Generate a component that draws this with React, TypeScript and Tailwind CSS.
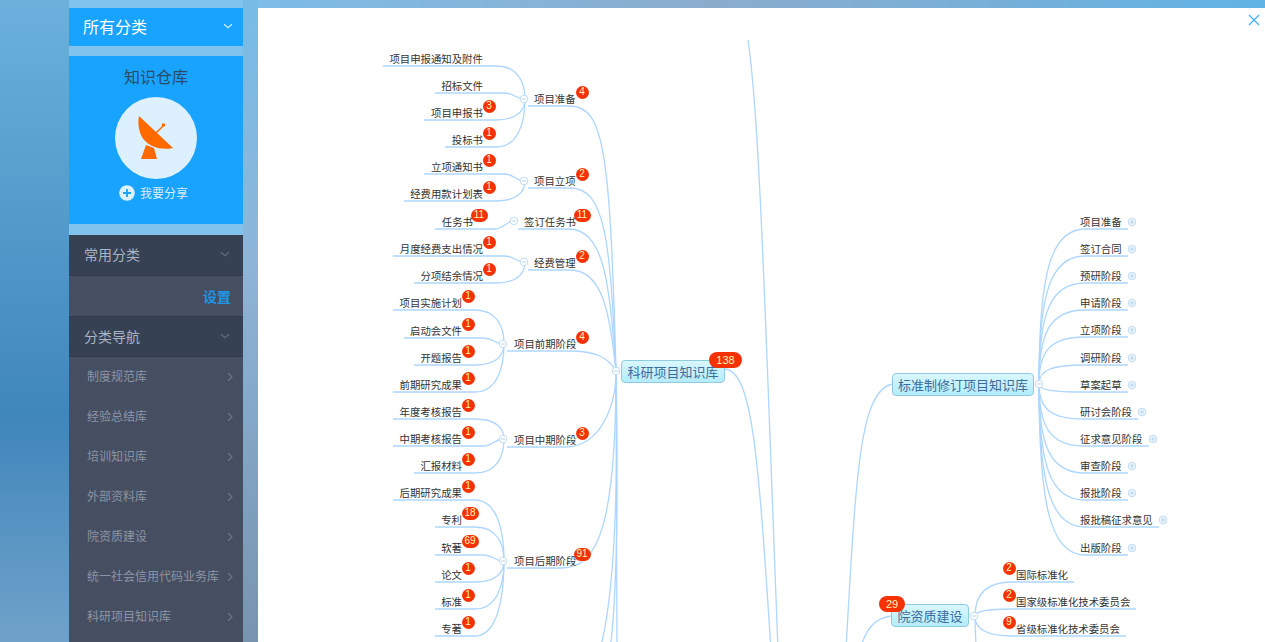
import React from 'react';

const LINE = '#aed6ff';

type Leaf = { t: string; tx: number; x0: number; y: number; end: number; b?: string; bx?: number };
type Branch = { t: string; tx: number; x0: number; y: number; end: number; b: string; bx: number; jx: number; jy: number; leaves: Leaf[] };

const leaf = (t: string, x0: number, y: number, end: number, b: string, bx: number): Leaf => ({
  t,
  x0,
  y,
  end,
  tx: x0 + 7,
  b,
  bx,
});

const branches: Branch[] = [
  {
    t: '项目准备', tx: 534, x0: 528, y: 106, end: 580, b: '4', bx: 582, jx: 524, jy: 99,
    leaves: [
      leaf('项目申报通知及附件', 383, 66, 487, '', 0),
      leaf('招标文件', 435, 93, 487, '', 0),
      leaf('项目申报书', 424, 120, 487, '3', 489),
      leaf('投标书', 445, 147, 487, '1', 489),
    ],
  },
  {
    t: '项目立项', tx: 534, x0: 528, y: 188, end: 580, b: '2', bx: 582, jx: 524, jy: 181,
    leaves: [
      leaf('立项通知书', 424, 174, 487, '1', 489),
      leaf('经费用款计划表', 404, 201, 487, '1', 489),
    ],
  },
  {
    t: '签订任务书', tx: 524, x0: 518, y: 229, end: 578, b: '11', bx: 582, jx: 514, jy: 221,
    leaves: [leaf('任务书', 435, 229, 477, '11', 479)],
  },
  {
    t: '经费管理', tx: 534, x0: 528, y: 270, end: 580, b: '2', bx: 582, jx: 524, jy: 262,
    leaves: [
      leaf('月度经费支出情况', 393, 256, 487, '1', 489),
      leaf('分项结余情况', 414, 283, 487, '1', 489),
    ],
  },
  {
    t: '项目前期阶段', tx: 514, x0: 507, y: 351, end: 580, b: '4', bx: 582, jx: 503, jy: 344,
    leaves: [
      leaf('项目实施计划', 393, 310, 466, '1', 468),
      leaf('启动会文件', 404, 338, 466, '1', 468),
      leaf('开题报告', 414, 365, 466, '1', 468),
      leaf('前期研究成果', 393, 392, 466, '1', 468),
    ],
  },
  {
    t: '项目中期阶段', tx: 514, x0: 507, y: 447, end: 575, b: '3', bx: 582, jx: 503, jy: 439,
    leaves: [
      leaf('年度考核报告', 393, 419, 466, '1', 468),
      leaf('中期考核报告', 393, 446, 466, '1', 468),
      leaf('汇报材料', 414, 473, 466, '1', 468),
    ],
  },
  {
    t: '项目后期阶段', tx: 514, x0: 507, y: 568, end: 572, b: '91', bx: 582, jx: 503, jy: 561,
    leaves: [
      leaf('后期研究成果', 393, 500, 466, '1', 468),
      leaf('专利', 435, 527, 466, '18', 470),
      leaf('软著', 435, 555, 466, '69', 470),
      leaf('论文', 435, 582, 466, '1', 468),
      leaf('标准', 435, 609, 466, '1', 468),
      leaf('专著', 435, 636, 466, '1', 468),
    ],
  },
];

const rightLeaves = [
  { t: '项目准备', y: 229, end: 1128 },
  { t: '签订合同', y: 256, end: 1128 },
  { t: '预研阶段', y: 283, end: 1128 },
  { t: '申请阶段', y: 310, end: 1128 },
  { t: '立项阶段', y: 337, end: 1128 },
  { t: '调研阶段', y: 365, end: 1128 },
  { t: '草案起草', y: 392, end: 1128 },
  { t: '研讨会阶段', y: 419, end: 1138 },
  { t: '征求意见阶段', y: 446, end: 1149 },
  { t: '审查阶段', y: 473, end: 1128 },
  { t: '报批阶段', y: 500, end: 1128 },
  { t: '报批稿征求意见', y: 527, end: 1159 },
  { t: '出版阶段', y: 555, end: 1128 },
];

const qualLeaves = [
  { t: '国际标准化', y: 582, end: 1074, b: '2' },
  { t: '国家级标准化技术委员会', y: 609, end: 1136, b: '2' },
  { t: '省级标准化技术委员会', y: 636, end: 1126, b: '9' },
];

const navItems = ['制度规范库', '经验总结库', '培训知识库', '外部资料库', '院资质建设', '统一社会信用代码业务库', '科研项目知识库'];

// leaf underline running right into its collapse circle
const leafPath = (l: Leaf, jx: number, jy: number) => {
  const sx = jx - 28;
  const midY = (l.y + jy) / 2;
  if (Math.abs(l.y - jy) < 10) {
    return `M${l.x0},${l.y} L${sx + 8},${l.y} C${jx - 10},${l.y} ${jx - 8},${jy} ${jx},${jy}`;
  }
  return `M${l.x0},${l.y} L${sx},${l.y} C${jx - 6},${l.y} ${jx + 1},${midY} ${jx + 1},${jy}`;
};

const branchPath = (b: Branch) => {
  const tx = 616;
  const ty = 371;
  if (b.y < 300) {
    return `M${b.x0},${b.y} L${b.end - 10},${b.y} C${b.end + 25},${b.y} ${tx - 6},${b.y + 50} ${tx},${ty}`;
  }
  if (b.y < 371) {
    return `M${b.x0},${b.y} L${b.end - 10},${b.y} C${b.end + 15},${b.y} ${tx - 8},${b.y + 6} ${tx},${ty}`;
  }
  return `M${b.x0},${b.y} L${b.end - 10},${b.y} C${b.end + 25},${b.y} ${tx},${b.y - 40} ${tx},${ty}`;
};

const rightPath = (y: number, end: number) =>
  `M1039,384 C1039,${y * 0.7 + 384 * 0.3} 1050,${y} 1085,${y} L${end},${y}`;

const qualPath = (y: number, end: number) =>
  `M975,616 C975,${y * 0.6 + 616 * 0.4} 985,${y} 1012,${y} L${end},${y}`;

function Badge({ x, y, v }: { x: number; y: number; v: string }) {
  const wide = v.length > 1;
  return (
    <div
      className={`absolute flex items-center justify-center rounded-full bg-[#f43205] text-[10px] leading-none text-[#fff6b8] font-['Liberation_Sans',sans-serif] h-[13px] ${wide ? 'w-[17px]' : 'w-[13px]'}`}
      style={{ left: x - 258 - (wide ? 8.5 : 6.5), top: y - 8 - 6.5 }}
    >
      {v}
    </div>
  );
}

function Label({ x, y, t }: { x: number; y: number; t: string }) {
  return (
    <div
      className="absolute h-[14px] whitespace-nowrap text-[10.4px] leading-[14px] text-[#333]"
      style={{ left: x - 258, top: y - 8 - 14 }}
    >
      {t}
    </div>
  );
}

function Topic({ x, y, w, h, t }: { x: number; y: number; w: number; h: number; t: string }) {
  return (
    <div
      className="absolute flex items-center justify-center whitespace-nowrap rounded-[4px] border border-[#8fcbdf] bg-gradient-to-b from-[#d9f7fe] to-[#b4ecfb] text-[13px] text-[#3c6c9e]"
      style={{ left: x - 258, top: y - 8, width: w, height: h }}
    >
      {t}
    </div>
  );
}

function Toggle({ x, y, plus }: { x: number; y: number; plus?: boolean }) {
  return (
    <g>
      <circle cx={x} cy={y} r={plus ? 3.8 : 3.8} fill={plus ? '#eaf5fd' : '#fff'} stroke="#c2dcf2" strokeWidth="1" />
      <path d={`M${x - 2},${y} H${x + 2}`} stroke="#b5d5ef" strokeWidth="1" />
      {plus && <path d={`M${x},${y - 2} V${y + 2}`} stroke="#b5d5ef" strokeWidth="1" />}
    </g>
  );
}

function Chevron({ down, color }: { down?: boolean; color: string }) {
  return (
    <svg width="10" height="10" viewBox="0 0 10 10" fill="none" stroke={color} strokeWidth="1.2">
      {down ? <path d="M1 3.2 L5 6.8 L9 3.2" /> : <path d="M3 1 L7 5 L3 9" />}
    </svg>
  );
}

function Sidebar() {
  return (
    <aside className="flex h-full w-[174px] shrink-0 flex-col bg-[#7fc3ee] pt-2">
      <div className="flex h-[38px] shrink-0 items-center justify-between bg-[#18a3ff] pb-[2px] pl-[14px] pr-[10px] text-base text-white">
        <span>所有分类</span>
        <Chevron down color="#d5eeff" />
      </div>
      <div className="mt-[10px] flex h-[168px] shrink-0 flex-col items-center bg-[#18a3ff] pt-[9px]">
        <div className="text-base leading-[22px] text-[#2b4a63]">知识仓库</div>
        <div className="mt-[10px] flex h-[82px] w-[82px] items-center justify-center rounded-full bg-[#dcf0fd]">
          <svg width="40" height="46" viewBox="0 0 40 46">
            <path d="M3 1 L37 33 C24 36 10 31 5 20 C2 13 2 6 3 1 Z" fill="#ff6a00" />
            <path d="M10 30 L5 44 L21 44 L18 33 Z" fill="#ff6a00" />
            <path d="M19 19 L27 11" stroke="#ff6a00" strokeWidth="1.5" />
            <circle cx="27.5" cy="10" r="1.8" fill="#ff6a00" />
          </svg>
        </div>
        <div className="mt-[6px] flex items-center gap-[5px] pr-[5px] text-xs text-[#d9eefc]">
          <svg width="16" height="16" viewBox="0 0 16 16">
            <circle cx="8" cy="8" r="7.8" fill="#dcf0fd" />
            <path d="M8 4 V12 M4 8 H12" stroke="#18a3ff" strokeWidth="1.8" />
          </svg>
          <span>我要分享</span>
        </div>
      </div>
      <div className="mt-[11px] flex flex-1 flex-col bg-[#464f62]">
        <div className="flex h-[41px] shrink-0 items-center justify-between border-b border-[#2f3a4b] bg-[#364154] pb-[2px] pl-[15px] pr-[13px] text-sm text-[#a9b4c4]">
          <span>常用分类</span>
          <Chevron down color="#5f6b7e" />
        </div>
        <div className="flex h-[40px] shrink-0 items-center justify-end pr-[12px] text-sm font-bold text-[#1e96e8]">设置</div>
        <div className="flex h-[41px] shrink-0 items-center justify-between border-y border-[#2f3a4b] bg-[#364154] pb-[2px] pl-[15px] pr-[13px] text-sm text-[#a9b4c4]">
          <span>分类导航</span>
          <Chevron down color="#5f6b7e" />
        </div>
        {navItems.map((n) => (
          <div key={n} className="flex h-[40px] shrink-0 items-center justify-between pl-[18px] pr-[8px] text-xs text-[#8b94a4]">
            <span className="-mt-[2px] whitespace-nowrap">{n}</span>
            <Chevron color="#6c7688" />
          </div>
        ))}
      </div>
    </aside>
  );
}

function MindMap() {
  return (
    <div className="relative flex-1 overflow-hidden bg-white">
      <svg className="absolute inset-0 h-full w-full" viewBox="258 8 1007 634" fill="none">
        <g stroke={LINE} strokeWidth="1.3">
          {branches.map((b) => (
            <g key={b.t}>
              <path d={branchPath(b)} />
              {b.leaves.map((l) => (
                <path key={l.t} d={leafPath(l, b.jx, b.jy)} />
              ))}
            </g>
          ))}
          {/* lower topics off screen */}
          <path d="M616,371 C618,480 616,590 600,650" />
          <path d="M616,371 C618,480 618,590 610,650" />
          <path d="M616,371 C617,480 617,590 617,650" />
          <path d="M725,369 C752,372 758,450 771,650" />
          <path d="M748,40 C760,120 766,340 778,650" />
          <path d="M892,384 C860,392 856,470 846,650" />
          <path d="M891,616 C875,618 866,628 860,650" />
          {rightLeaves.map((r) => (
            <path key={r.t} d={rightPath(r.y, r.end)} />
          ))}
          {qualLeaves.map((r) => (
            <path key={r.t} d={qualPath(r.y, r.end)} />
          ))}
          <path d="M975,616 C975,630 976,640 976,650" />
        </g>
        {branches.map((b) => (
          <Toggle key={b.t} x={b.jx} y={b.jy} />
        ))}
        <Toggle x={616} y={371} />
        <Toggle x={1039} y={384} />
        <Toggle x={974} y={616} />
        {rightLeaves.map((r) => (
          <Toggle key={r.t} x={r.end + 4} y={r.y - 7} plus />
        ))}
      </svg>

      {branches.map((b) => (
        <React.Fragment key={b.t}>
          <Label x={b.tx} y={b.y} t={b.t} />
          <Badge x={b.bx} y={b.y - 14} v={b.b} />
          {b.leaves.map((l) => {
            const right = l.end - 4;
            const width = l.t.length * 10.4;
            return (
              <React.Fragment key={l.t}>
                <Label x={right - width} y={l.y} t={l.t} />
                {l.b && <Badge x={l.bx as number} y={l.y - 14} v={l.b} />}
              </React.Fragment>
            );
          })}
        </React.Fragment>
      ))}

      {rightLeaves.map((r) => (
        <Label key={r.t} x={1080} y={r.y} t={r.t} />
      ))}
      {qualLeaves.map((r) => (
        <React.Fragment key={r.t}>
          <Label x={1016} y={r.y} t={r.t} />
          <Badge x={1009} y={r.y - 14} v={r.b} />
        </React.Fragment>
      ))}

      <Topic x={621} y={360} w={104} h={23} t="科研项目知识库" />
      <Topic x={892} y={373} w={142} h={23} t="标准制修订项目知识库" />
      <Topic x={891} y={604} w={78} h={23} t="院资质建设" />

      <div className="absolute left-[451px] top-[344px] flex h-[16px] w-[33px] items-center justify-center rounded-full bg-[#f43205] font-['Liberation_Sans',sans-serif] text-[11px] text-[#fff6b8]">
        138
      </div>
      <div className="absolute left-[621px] top-[588px] flex h-[16px] w-[26px] items-center justify-center rounded-full bg-[#f43205] font-['Liberation_Sans',sans-serif] text-[11px] text-[#fff6b8]">
        29
      </div>

      <svg className="absolute right-[5px] top-[6px]" width="12" height="12" viewBox="0 0 12 12" stroke="#3bb0ff" strokeWidth="1.2">
        <path d="M1 1 L11 11 M11 1 L1 11" />
      </svg>
    </div>
  );
}

const App: React.FC = () => {
  return (
    <div className="flex h-screen overflow-hidden bg-gradient-to-b from-[#6bb1dc] via-[#3f86bb] via-65% to-[#6fa2c9] pl-[69px] font-['Noto_Sans_CJK_SC',sans-serif]">
      <Sidebar />
      <div className="w-[15px] shrink-0 bg-gradient-to-b from-[#76bce7] via-[#8db6d8] via-40% to-[#7794af]" />
      <div className="flex flex-1 flex-col">
        <div className="h-2 shrink-0 bg-gradient-to-r from-[#7dbde8] via-[#8aaccb] via-45% to-[#5fb3e5]" />
        <MindMap />
      </div>
    </div>
  );
};

export default App;
